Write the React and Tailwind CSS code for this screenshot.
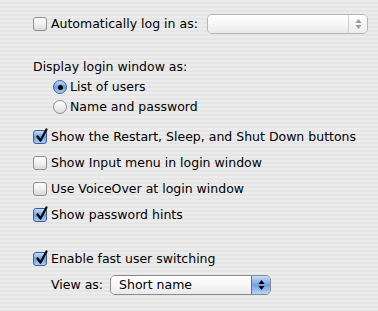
import React from "react";

const font = { fontFamily: '"DejaVu Sans", "Lucida Grande", Verdana, sans-serif' };

function Checkbox({ checked }) {
  return (
    <span
      className={
        "relative inline-block w-[14px] h-[14px] shrink-0 rounded-[3px] border " +
        (checked
          ? "border-[#3a5f9c] bg-gradient-to-b from-[#c7dcf6] via-[#6d9fe0] to-[#a9cdf7]"
          : "border-[#8e8e8e] bg-gradient-to-b from-[#ffffff] via-[#f0f0f0] to-[#d9d9d9]")
      }
    >
      {checked && (
        <svg className="absolute left-[1px] top-[-3px]" width="14" height="15" viewBox="0 0 14 15">
          <path d="M2.5 8.5 L5.5 12.5 L11.5 1.5" fill="none" stroke="#000" strokeWidth="2.2" strokeLinecap="round" strokeLinejoin="round" />
        </svg>
      )}
    </span>
  );
}

function Radio({ checked }) {
  return (
    <span
      className={
        "relative inline-flex items-center justify-center w-[14px] h-[14px] shrink-0 rounded-full border " +
        (checked
          ? "border-[#3a5f9c] bg-gradient-to-b from-[#c7dcf6] via-[#6d9fe0] to-[#a9cdf7]"
          : "border-[#8e8e8e] bg-gradient-to-b from-[#ffffff] via-[#f0f0f0] to-[#d9d9d9]")
      }
    >
      {checked && <span className="w-[5px] h-[5px] rounded-full bg-black" />}
    </span>
  );
}

function Arrows({ color }) {
  return (
    <svg width="7" height="12" viewBox="0 0 7 12">
      <path d="M3.5 1 L6.5 5 L0.5 5 Z" fill={color} />
      <path d="M3.5 11 L6.5 7 L0.5 7 Z" fill={color} />
    </svg>
  );
}

function Popup({ label, disabled, className }) {
  return (
    <div
      className={
        "flex h-[20px] rounded-[5px] border overflow-hidden " +
        (disabled ? "border-[#b4b4b4] " : "border-[#8a8a8a] ") +
        className
      }
    >
      <div className="flex-1 flex items-center pl-[8px] text-black bg-gradient-to-b from-[#ffffff] via-[#f7f7f7] to-[#e9e9e9]">
        {label}
      </div>
      {disabled ? (
        <div className="w-[19px] flex items-center justify-center border-l border-[#cfcfcf] bg-gradient-to-b from-[#ffffff] to-[#ececec]">
          <Arrows color="#9a9a9a" />
        </div>
      ) : (
        <div className="w-[19px] flex items-center justify-center border-l border-[#4d76b8] bg-gradient-to-b from-[#c9def7] via-[#6fa1e2] to-[#b7d6fb]">
          <Arrows color="#000" />
        </div>
      )}
    </div>
  );
}

function CheckRow({ checked, children }) {
  return (
    <div className="flex items-center h-[26px]">
      <Checkbox checked={checked} />
      <span className="ml-[4px]">{children}</span>
    </div>
  );
}

export default function App() {
  return (
    <div
      className="w-[378px] h-[311px] overflow-hidden text-[12.5px] text-black bg-[repeating-linear-gradient(180deg,#ececec_0px,#ececec_2px,#e5e5e5_2px,#e5e5e5_4px)] pl-[33px] pt-[14px]"
      style={font}
    >
      <div className="flex items-center h-[20px]">
        <Checkbox />
        <span className="ml-[4px]">Automatically log in as:</span>
        <Popup disabled className="ml-auto mr-[10px] w-[161px]" />
      </div>

      <div className="flex items-center h-[20px] mt-[23px]">Display login window as:</div>
      <div className="flex items-center h-[20px] pl-[20px]">
        <Radio checked />
        <span className="ml-[3px]">List of users</span>
      </div>
      <div className="flex items-center h-[20px] pl-[20px]">
        <Radio />
        <span className="ml-[3px]">Name and password</span>
      </div>

      <div className="mt-[7px]">
        <CheckRow checked>Show the Restart, Sleep, and Shut Down buttons</CheckRow>
        <CheckRow>Show Input menu in login window</CheckRow>
        <CheckRow>Use VoiceOver at login window</CheckRow>
        <CheckRow checked>Show password hints</CheckRow>
      </div>

      <div className="mt-[18px]">
        <CheckRow checked>Enable fast user switching</CheckRow>
        <div className="flex items-center h-[26px] pl-[18px]">
          <span>View as:</span>
          <Popup label="Short name" className="ml-[7px] w-[161px]" />
        </div>
      </div>
    </div>
  );
}
